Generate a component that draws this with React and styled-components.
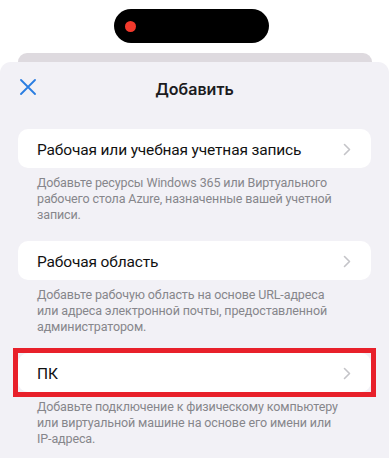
import React from "react";
import styled, { createGlobalStyle } from "styled-components";

const items = [
  {
    title: "Рабочая или учебная учетная запись",
    text: "Добавьте ресурсы Windows 365 или Виртуального рабочего стола Azure, назначенные вашей учетной записи.",
  },
  {
    title: "Рабочая область",
    text: "Добавьте рабочую область на основе URL-адреса или адреса электронной почты, предоставленной администратором.",
  },
  {
    title: "ПК",
    text: "Добавьте подключение к физическому компьютеру или виртуальной машине на основе его имени или IP-адреса.",
    highlighted: true,
  },
];

const App = () => {
  return (
    <>
      <GlobalStyle />
      <Page>
        <StatusArea>
          <Island>
            <RecordDot />
          </Island>
        </StatusArea>
        <BackCard />
        <Sheet>
          <Header>
            <CloseButton aria-label="close">
              <svg width="16" height="16" viewBox="0 0 16 16">
                <path
                  d="M1 1 L15 15 M15 1 L1 15"
                  stroke="#2a7de1"
                  strokeWidth="1.8"
                  strokeLinecap="round"
                />
              </svg>
            </CloseButton>
            <Title>Добавить</Title>
          </Header>
          <List>
            {items.map((item) => (
              <Group key={item.title}>
                <RowFrame $highlighted={item.highlighted}>
                  <Row>
                    <RowLabel>{item.title}</RowLabel>
                    <svg width="8" height="13" viewBox="0 0 8 13">
                      <path
                        d="M1.5 1.5 L6.5 6.5 L1.5 11.5"
                        fill="none"
                        stroke="#c4c4c8"
                        strokeWidth="1.6"
                        strokeLinecap="round"
                        strokeLinejoin="round"
                      />
                    </svg>
                  </Row>
                </RowFrame>
                <Hint>{item.text}</Hint>
              </Group>
            ))}
          </List>
        </Sheet>
      </Page>
    </>
  );
};
export default App;

const GlobalStyle = createGlobalStyle`
  html, body {
    margin: 0;
    padding: 0;
    background: #ffffff;
    font-family: Roboto, "Noto Sans", "Liberation Sans", sans-serif;
  }
`;

const Page = styled.div`
  width: 390px;
  height: 458px;
  display: flex;
  flex-direction: column;
  background: #ffffff;
  overflow: hidden;
`;

const StatusArea = styled.div`
  height: 53px;
  display: flex;
  justify-content: center;
  padding-top: 9px;
  box-sizing: border-box;
`;

const Island = styled.div`
  width: 155px;
  height: 34px;
  margin-right: 7px;
  border-radius: 17px;
  background: #000000;
  display: flex;
  align-items: center;
  padding-left: 11px;
  box-sizing: border-box;
`;

const RecordDot = styled.span`
  width: 11px;
  height: 11px;
  border-radius: 50%;
  background: #f2392c;
`;

const BackCard = styled.div`
  height: 9px;
  margin: 0 18px;
  border-radius: 10px 10px 0 0;
  background: #dedadf;
`;

const Sheet = styled.div`
  flex: 1;
  margin: 0 1px 0 0;
  border-radius: 11px 11px 0 0;
  background: #f2f1f6;
`;

const Header = styled.div`
  height: 52px;
  display: flex;
  align-items: center;
  justify-content: center;
  position: relative;
  padding-top: 1px;
  box-sizing: border-box;
`;

const CloseButton = styled.button`
  position: absolute;
  left: 20px;
  top: 17px;
  border: none;
  background: none;
  padding: 0;
  display: flex;
`;

const Title = styled.div`
  font-family: Inter, "Noto Sans", sans-serif;
  font-size: 16px;
  font-weight: 600;
  color: #1c1c1e;
  margin-top: 1px;
`;

const List = styled.div`
  padding: 15px 18px 0 18px;
  display: flex;
  flex-direction: column;
  gap: 18px;
`;

const Group = styled.div`
  display: flex;
  flex-direction: column;
`;

const RowFrame = styled.div`
  outline: ${(p) => (p.$highlighted ? "5px solid #e8202a" : "none")};
`;

const Row = styled.div`
  height: 39px;
  border-radius: 10px;
  background: #ffffff;
  display: flex;
  align-items: center;
  justify-content: space-between;
  padding: 2px 20px 0 19px;
  box-sizing: border-box;
`;

const RowLabel = styled.span`
  font-size: 15.5px;
  letter-spacing: -0.15px;
  color: #111111;
`;

const Hint = styled.p`
  margin: 7px 0 0 0;
  padding: 0 33px 0 19px;
  font-size: 12.5px;
  letter-spacing: -0.12px;
  line-height: 16px;
  color: #86868b;
`;
